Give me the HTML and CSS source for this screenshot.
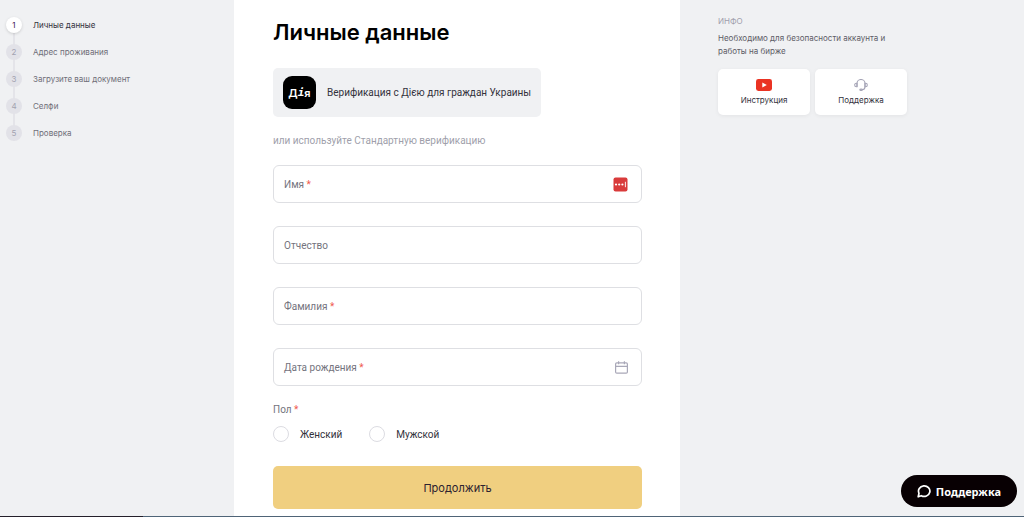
FILE: index.html
```html
<!DOCTYPE html>
<html lang="ru">
<head>
    <meta charset="UTF-8">
    <meta name="viewport" content="width=device-width, initial-scale=1.0">
    <title>Личные данные</title>
    <link rel="stylesheet" href="styles.css">
</head>
<body>
    <div class="page">
        <nav class="sidebar">
            <ol class="steps">
                <li class="step active"><span class="step-number">1</span>Личные данные</li>
                <li class="step"><span class="step-number">2</span>Адрес проживания</li>
                <li class="step"><span class="step-number">3</span>Загрузите ваш документ</li>
                <li class="step"><span class="step-number">4</span>Селфи</li>
                <li class="step"><span class="step-number">5</span>Проверка</li>
            </ol>
        </nav>

        <main class="content">
            <h1>Личные данные</h1>
            <button type="button" class="diia">
                <span class="diia-logo">Д<i>і</i>я</span>
                Верификация с Дією для граждан Украины
            </button>
            <p class="hint">или используйте Стандартную верификацию</p>

            <form class="form">
                <div class="field">
                    <label for="first-name">Имя <span class="required">*</span></label>
                    <input type="text" id="first-name">
                    <svg class="password-icon" width="15" height="15" viewBox="0 0 15 15">
                        <rect x="0.5" y="0.5" width="14" height="14" rx="2" fill="#d93b3b"/>
                        <circle cx="3" cy="7.5" r="1.1" fill="#fff"/>
                        <circle cx="6.2" cy="7.5" r="1.1" fill="#fff"/>
                        <circle cx="9.4" cy="7.5" r="1.1" fill="#fff"/>
                        <path d="M12.4 4.8v5.4" stroke="#fff" stroke-width="0.9"/>
                    </svg>
                </div>
                <div class="field">
                    <label for="middle-name">Отчество</label>
                    <input type="text" id="middle-name">
                </div>
                <div class="field">
                    <label for="last-name">Фамилия <span class="required">*</span></label>
                    <input type="text" id="last-name">
                </div>
                <div class="field">
                    <label for="birth-date">Дата рождения <span class="required">*</span></label>
                    <input type="text" id="birth-date">
                    <svg width="13" height="13" viewBox="0 0 13 13" fill="none" stroke="#a9a8b8" stroke-width="1.2">
                        <rect x="0.6" y="1.8" width="11.8" height="10.4" rx="1.2"/>
                        <path d="M0.6 5.4h11.8M3.6 0.2v3M9.4 0.2v3"/>
                    </svg>
                </div>

                <fieldset class="gender">
                    <legend>Пол <span class="required">*</span></legend>
                    <div class="options">
                        <label><input type="radio" name="gender" value="female">Женский</label>
                        <label><input type="radio" name="gender" value="male">Мужской</label>
                    </div>
                </fieldset>

                <button type="submit" class="submit">Продолжить</button>
            </form>
        </main>

        <aside class="info">
            <h2>ИНФО</h2>
            <p>Необходимо для безопасности аккаунта и работы на бирже</p>
            <div class="cards">
                <a class="card" href="#">
                    <svg width="16" height="12" viewBox="0 0 16 12">
                        <rect width="16" height="12" rx="2.4" fill="#ea3323"/>
                        <path d="M6.3 3.4v5.2L10.8 6z" fill="#fff"/>
                    </svg>
                    Инструкция
                </a>
                <a class="card" href="#">
                    <svg width="14" height="12" viewBox="0 0 14 12" fill="none" stroke="#a5a4b6" stroke-width="1.1">
                        <path d="M3 7.8V4.5a4 4 0 0 1 8 0v3.3c0 1.7-1.2 3-3 3"/>
                        <path d="M3 4.2H2.3C1.2 4.2.7 5 .7 6s.5 1.8 1.6 1.8H3zM11 4.2h.7c1.1 0 1.6.8 1.6 1.8s-.5 1.8-1.6 1.8H11z"/>
                        <ellipse cx="7.1" cy="10.8" rx="1.3" ry="0.7"/>
                    </svg>
                    Поддержка
                </a>
            </div>
        </aside>
    </div>

    <button type="button" class="support">
        <svg width="14" height="14" viewBox="0 0 14 14" fill="none" stroke="#fff" stroke-width="1.7" stroke-linejoin="round">
            <path d="M1.2 12.8L2 9.3a5.7 5.3 0 1 1 2.3 2.4z"/>
        </svg>
        Поддержка
    </button>
    <footer class="taskbar"></footer>
</body>
</html>
```

FILE: styles.css
```css
* {
    box-sizing: border-box;
}
body {
    margin: 0;
    background-color: #f0f1f3;
    color: #33323c;
    font-family: Inter, "Noto Sans", sans-serif;
    font-size: 8px;
}
button,
input {
    font-family: inherit;
}
button {
    border: none;
    cursor: pointer;
}
.page {
    display: grid;
    grid-template-columns: 234fr 446fr 344fr;
    min-height: 100vh;
}
.sidebar {
    padding: 17px 6px;
}
.steps {
    display: flex;
    flex-direction: column;
    gap: 11px;
    margin: 0;
    padding: 0;
    list-style: none;
    background: linear-gradient(#e4e4e9, #e4e4e9) 7px 0 / 2px 100% no-repeat;
}
.step {
    display: flex;
    align-items: center;
    gap: 11px;
    color: #6f6e78;
}
.step-number {
    display: flex;
    align-items: center;
    justify-content: center;
    width: 16px;
    height: 16px;
    border-radius: 50%;
    background-color: #e2e2e8;
    color: #a3a2b0;
}
.step.active {
    color: #33323c;
}
.step.active .step-number {
    background-color: #fff;
    color: #3c1450;
    box-shadow: 0 1px 3px rgba(0, 0, 0, 0.15);
}
.content {
    padding: 18px 38px 7px 39px;
    background-color: #fff;
}
h1 {
    margin: 0 0 22px;
    color: #000;
    font-size: 22px;
    font-weight: 600;
    line-height: 28px;
}
.diia,
.hint,
.field,
.gender {
    font-family: Roboto, Inter, sans-serif;
    font-size: 10px;
}
.diia {
    display: flex;
    align-items: center;
    gap: 11px;
    padding: 8px 10px;
    border-radius: 5px;
    background-color: #f0f1f3;
    color: #33323c;
}
.diia-logo {
    display: flex;
    align-items: center;
    justify-content: center;
    width: 33px;
    height: 33px;
    border-radius: 9px;
    background-color: #000;
    color: #fff;
    font-family: Inter, sans-serif;
    font-size: 11px;
    font-weight: 600;
}
.diia-logo i {
    font-family: "DejaVu Sans Mono", monospace;
}
.hint {
    margin: 17px 0;
    color: #a09fab;
    line-height: 14px;
}
.form {
    display: flex;
    flex-direction: column;
    gap: 23px;
}
.field {
    display: flex;
    align-items: center;
    gap: 8px;
    height: 38px;
    padding: 0 13px 0 10px;
    border: 1px solid #dedfe3;
    border-radius: 6px;
    color: #74737d;
}
.field input {
    flex: 1;
    min-width: 0;
    border: none;
    outline: none;
    background: none;
    font-size: 10px;
}
.required {
    color: #ef5a4e;
}
.gender {
    margin: -7px 0 0;
    padding: 0;
    border: none;
}
.gender legend {
    padding: 0;
    color: #74737d;
    line-height: 15px;
}
.options {
    display: flex;
    gap: 27px;
    padding-top: 9px;
}
.options label {
    display: flex;
    align-items: center;
    gap: 11px;
}
.options input {
    appearance: none;
    width: 16px;
    height: 16px;
    margin: 0;
    border: 1px solid #dcdce2;
    border-radius: 50%;
    background-color: #fff;
}
.options input:checked {
    border: 5px solid #f0cf80;
}
.submit {
    height: 43px;
    margin-top: 1px;
    border-radius: 5px;
    background-color: #f0cf80;
    color: #2c2230;
    font-size: 11px;
}
.info {
    padding: 15px 38px;
}
.info h2 {
    margin: 0 0 4px;
    color: #9f9eac;
    font-size: 8px;
    font-weight: 400;
    line-height: 13px;
}
.info p {
    max-width: 180px;
    margin: 0 0 11px;
    color: #5d5c66;
    line-height: 13px;
}
.cards {
    display: flex;
    gap: 5px;
}
.card {
    display: flex;
    flex-direction: column;
    align-items: center;
    gap: 4px;
    width: 92px;
    padding: 10px;
    border-radius: 5px;
    background-color: #fff;
    box-shadow: 0 1px 4px rgba(0, 0, 0, 0.06);
    color: #33323c;
    text-decoration: none;
}
/* floating chat button stays over the page */
.support {
    position: fixed;
    right: 7px;
    bottom: 10px;
    display: flex;
    align-items: center;
    gap: 5px;
    height: 32px;
    padding: 0 16px;
    border-radius: 16px;
    background-color: #080003;
    color: #fff;
    font-family: "Noto Sans", sans-serif;
    font-size: 11px;
    font-weight: 700;
}
.taskbar {
    position: fixed;
    right: 0;
    bottom: 0;
    left: 0;
    height: 1px;
    background: linear-gradient(to right, #241f2a 14%, #4f6477 14%);
}
```
